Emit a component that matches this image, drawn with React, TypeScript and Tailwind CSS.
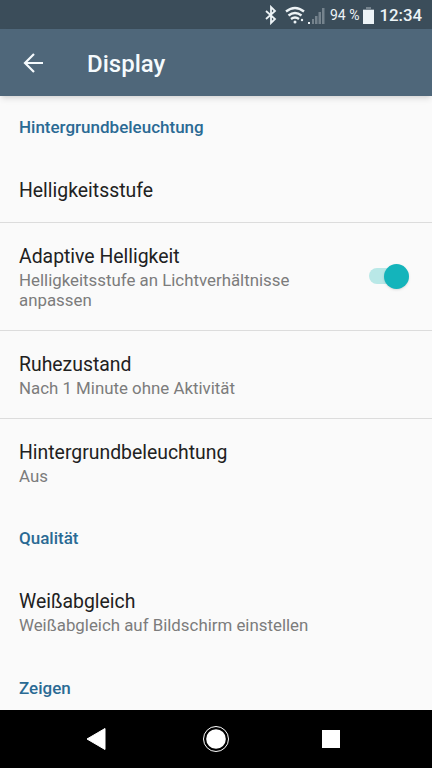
interface RowProps {
  title: string;
  summary?: string;
  className: string;
  checked?: boolean;
}

const SectionTitle = ({ text, className }: { text: string; className: string }) => (
  <h2 className={`${className} px-[19px] text-[17px] leading-5 font-medium text-[#2a6a94]`}>
    {text}
  </h2>
);

const Row = ({ title, summary, className, checked }: RowProps) => (
  <div className={`${className} flex items-center justify-between px-[19px]`}>
    <div className="w-[300px]">
      <p className="text-[19.4px] leading-6 text-[#212121]">{title}</p>
      {summary && <p className="pt-px text-[16.85px] leading-5 text-[#7c7c7c]">{summary}</p>}
    </div>
    {checked && (
      <div className="mr-1 mb-[3px] flex h-[25px] w-10 items-center">
        <div className="flex h-4 w-[35px] items-center rounded-full bg-[#b9e8e7]">
          <div className="ml-[15px] size-[25px] shrink-0 rounded-full bg-[#14b4bb] shadow" />
        </div>
      </div>
    )}
  </div>
);

const StatusBar = () => (
  <div className="flex h-[29px] items-center justify-end bg-[#3b4d5a] pt-px pr-[10px] text-[#edf3f6]">
    <svg className="mr-[8px]" width="12" height="20" viewBox="0 0 12 20" fill="none" stroke="currentColor" strokeWidth="1.8">
      <path d="M1 6l9 8-4 4V2l4 4-9 8" />
    </svg>
    <svg width="20" height="18" viewBox="0 0 20 18" fill="none" stroke="currentColor" strokeWidth="2.4">
      <path d="M1 5.5Q10-1.5 19 5.5M3.5 9.5Q10 4.5 16.5 9.5M6 13Q10 10 14 13" />
      <circle cx="10" cy="16" r="1.5" fill="currentColor" stroke="none" />
      <circle cx="17" cy="14" r="1.2" fill="currentColor" stroke="none" />
    </svg>
    <svg className="ml-[3px]" width="17" height="17" viewBox="0 0 17 17" fill="#75838d">
      <path d="M4 12h2v5H4zM7 9h2.500v8H7zM10.500 5h2.500v12h-2.500zM14 1h2.500v16H14z" />
      <path d="M0 15h2v2H0z" fill="#edf3f6" />
    </svg>
    <span className="ml-[5px] text-[14px]">94 %</span>
    <svg className="ml-[4px]" width="11" height="17" viewBox="0 0 11 17" fill="currentColor">
      <path d="M3 0h5v2h3v1H0V2h3z" fill="#75838d" />
      <path d="M0 3h11v14H0z" />
    </svg>
    <span className="ml-[5px] pt-px text-[16.8px] font-medium">12:34</span>
  </div>
);

const App = () => {
  return (
    <div className="flex h-[768px] w-[432px] flex-col overflow-hidden bg-[#fafafa] font-['Roboto','Liberation_Sans',sans-serif]">
      <StatusBar />
      <header className="z-10 flex h-[67px] shrink-0 items-center bg-[#4f677a] pl-[23px] text-[#f5fafd] shadow-md">
        <svg width="22" height="22" viewBox="0 0 22 22" fill="none" stroke="currentColor" strokeWidth="2.2">
          <path d="M20 11H3M11 2l-9 9 9 9" />
        </svg>
        <h1 className="ml-[42px] pt-[2px] text-[24px] font-medium">Display</h1>
      </header>
      <main className="min-h-0 flex-1">
        <SectionTitle text="Hintergrundbeleuchtung" className="pt-[21px]" />
        <Row title="Helligkeitsstufe" className="h-[86px] border-b border-[#dcdcdc] pt-[23px]" />
        <Row
          title="Adaptive Helligkeit"
          summary="Helligkeitsstufe an Lichtverhältnisse anpassen"
          className="h-[108px] border-b border-[#dcdcdc] pt-[2px]"
          checked
        />
        <Row
          title="Ruhezustand"
          summary="Nach 1 Minute ohne Aktivität"
          className="h-[88px] border-b border-[#dcdcdc] pt-[2px]"
        />
        <Row title="Hintergrundbeleuchtung" summary="Aus" className="h-[90px] pb-px" />
        <SectionTitle text="Qualität" className="pt-[19px]" />
        <Row
          title="Weißabgleich"
          summary="Weißabgleich auf Bildschirm einstellen"
          className="h-[129px]"
        />
        <SectionTitle text="Zeigen" className="pt-px" />
      </main>
      <nav className="flex h-[58px] shrink-0 items-center bg-black pl-[85px]">
        <svg width="260" height="30" viewBox="0 0 260 30" fill="white">
          <path d="M2 15L20 4.500v21z" stroke="white" strokeLinejoin="round" />
          <circle cx="131" cy="15" r="9.800" />
          <circle cx="131" cy="15" r="12.500" fill="none" stroke="white" />
          <rect x="237" y="6" width="18" height="18" />
        </svg>
      </nav>
    </div>
  );
};

export default App;
